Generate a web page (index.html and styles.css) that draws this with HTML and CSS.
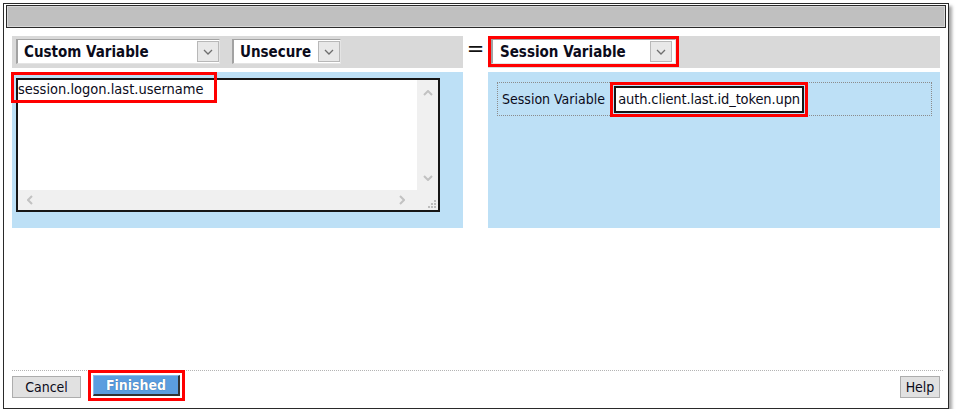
FILE: index.html
```html
<!DOCTYPE html>
<html lang="en">
<head>
<meta charset="utf-8">
<title>Variable Assign</title>
<link rel="stylesheet" href="styles.css">
</head>
<body>
<div class="window">
  <div class="titlebar"></div>
  <div class="main">
    <div class="bar">
      <div class="select sel-custom">
        <span class="sel-text">Custom Variable</span>
        <span class="sel-btn"><svg width="10" height="6" viewBox="0 0 10 6"><polyline points="1,1 5,5 9,1"/></svg></span>
      </div>
      <div class="select sel-unsecure">
        <span class="sel-text">Unsecure</span>
        <span class="sel-btn"><svg width="10" height="6" viewBox="0 0 10 6"><polyline points="1,1 5,5 9,1"/></svg></span>
      </div>
    </div>
    <div class="eq">=</div>
    <div class="bar">
      <div class="select sel-session marked">
        <span class="sel-text">Session Variable</span>
        <span class="sel-btn"><svg width="10" height="6" viewBox="0 0 10 6"><polyline points="1,1 5,5 9,1"/></svg></span>
      </div>
    </div>

    <div class="panel left-panel">
      <div class="textarea">
        <div class="ta-text">session.logon.last.username</div>
        <div class="vscroll">
          <svg width="10" height="6" viewBox="0 0 10 6"><polyline points="1,5 5,1 9,5"/></svg>
          <svg width="10" height="6" viewBox="0 0 10 6"><polyline points="1,1 5,5 9,1"/></svg>
        </div>
        <div class="hscroll">
          <svg width="6" height="10" viewBox="0 0 6 10"><polyline points="5,1 1,5 5,9"/></svg>
          <svg width="6" height="10" viewBox="0 0 6 10"><polyline points="1,1 5,5 1,9"/></svg>
        </div>
        <div class="corner">
          <svg width="10" height="10" viewBox="0 0 10 10">
            <rect x="8" y="2" width="2" height="2"/>
            <rect x="5" y="5" width="2" height="2"/><rect x="8" y="5" width="2" height="2"/>
            <rect x="2" y="8" width="2" height="2"/><rect x="5" y="8" width="2" height="2"/><rect x="8" y="8" width="2" height="2"/>
          </svg>
        </div>
      </div>
      <div class="annot"></div>
    </div>
    <div class="gap-cell"></div>
    <div class="panel right-panel">
      <div class="field">
        <span class="label">Session Variable</span>
        <div class="input marked-in"><span>auth.client.last.id_token.upn</span></div>
      </div>
    </div>
  </div>
  <div class="footer">
    <button class="btn cancel">Cancel</button>
    <button class="btn primary">Finished</button>
    <button class="btn help">Help</button>
  </div>
</div>
</body>
</html>
```

FILE: styles.css
```css
* { box-sizing: border-box; }

html, body {
  margin: 0;
  padding: 0;
  background: #ffffff;
}

body {
  font-family: "DejaVu Sans Condensed", "DejaVu Sans", sans-serif;
  font-stretch: condensed;
  color: #0b0b1a;
}

.window {
  margin: 3px 0 0 3px;
  width: 946px;
  height: 406px;
  border: 1px solid #2a2a2a;
  padding: 1px 2px 2px 2px;
  display: flex;
  flex-direction: column;
  background: #fff;
  box-shadow: 3px 3px 3px rgba(0, 0, 0, 0.35);
}

.titlebar {
  height: 23px;
  background: #c0c0c0;
  border: 1px solid #2a2a2a;
  box-shadow: inset 0 0 0 1px #d8d8d8;
}

.main {
  flex: 1;
  display: grid;
  grid-template-columns: 451px 25px 452px;
  grid-template-rows: 32px 156px;
  row-gap: 4px;
  align-content: start;
  padding: 8px 0 0 6px;
}

.bar {
  background: #d9d9d9;
  display: flex;
  align-items: flex-start;
  gap: 12px;
  padding: 3px 4px;
}

.bar:nth-child(3) {
  padding-left: 3px;
}

.select {
  height: 25px;
  background: #fff;
  border-top: 1px solid #a2a2a2;
  border-left: 2px solid #a2a2a2;
  border-bottom: 1px solid #e4e4e4;
  border-right: 1px solid #e4e4e4;
  display: flex;
  align-items: center;
}

.sel-text {
  flex: 1;
  padding-left: 6px;
  font-weight: bold;
  font-size: 15px;
  white-space: nowrap;
}

.sel-btn {
  width: 22px;
  height: 21px;
  background: #e8e8e8;
  border: 1px solid #b8b8b8;
  display: flex;
  align-items: center;
  justify-content: center;
}

.sel-btn svg polyline {
  fill: none;
  stroke: #6e6e6e;
  stroke-width: 1.3;
}

.sel-custom { width: 204px; }
.sel-unsecure { width: 109px; }
.sel-session { width: 185px; }
.sel-session .sel-btn { margin-right: 3px; }
.sel-session .sel-text { padding-left: 7px; }

.marked {
  outline: 3px solid #ff0000;
  outline-offset: 0;
}

.eq {
  font-family: "DejaVu Sans", sans-serif;
  font-stretch: normal;
  font-size: 21px;
  line-height: 20px;
  text-align: center;
  padding-top: 3px;
  color: #111;
}

.panel {
  background: #bde0f6;
}

.left-panel {
  position: relative;
  padding: 6px 0 0 4px;
}

.textarea {
  width: 424px;
  height: 134px;
  border: 2px solid #161616;
  background: #fff;
  display: grid;
  grid-template-columns: 1fr 21px;
  grid-template-rows: 1fr 20px;
}

.ta-text {
  font-size: 14.5px;
  line-height: 17px;
  padding: 1px 0 0 0;
  white-space: nowrap;
}

.vscroll {
  background: #f0f0f0;
  display: flex;
  flex-direction: column;
  align-items: center;
  justify-content: space-between;
  padding: 10px 0 9px;
}

.hscroll {
  background: #f0f0f0;
  display: flex;
  align-items: center;
  justify-content: space-between;
  padding: 0 12px 0 9px;
}

.vscroll polyline,
.hscroll polyline {
  fill: none;
  stroke: #c2c2c2;
  stroke-width: 2;
}

.corner {
  background: #f0f0f0;
  display: flex;
  align-items: flex-end;
  justify-content: flex-end;
  padding: 0 2px 2px 0;
}

.corner rect {
  fill: #bdbdbd;
}

.annot {
  position: absolute;
  left: -1px;
  top: 0;
  width: 206px;
  height: 31px;
  border: 3px solid #ff0000;
  pointer-events: none;
}

.right-panel {
  padding: 10px 8px 0 9px;
}

.field {
  height: 34px;
  border: 1px dotted #8c8c8c;
  display: flex;
  align-items: center;
  padding-left: 4px;
  gap: 9px;
}

.label {
  font-size: 14px;
  white-space: nowrap;
}

.input {
  width: 190px;
  height: 27px;
  border: 2px solid #161616;
  background: #fff;
  display: flex;
  align-items: center;
  justify-content: flex-end;
  overflow: hidden;
  padding-right: 2px;
  font-size: 14.5px;
  letter-spacing: -0.12px;
  white-space: nowrap;
}

.marked-in {
  outline: 3px solid #ff0000;
  outline-offset: 1px;
}

.footer {
  margin: 0 3px 0 6px;
  height: 36px;
  border-top: 1px dotted #b4b4b4;
  padding-top: 5px;
  display: flex;
  align-items: flex-start;
}

.btn {
  font-family: "DejaVu Sans Condensed", "DejaVu Sans", sans-serif;
  font-stretch: condensed;
  font-size: 14px;
  color: #0b0b1a;
  background: #e1e1e1;
  border: 1px solid #adadad;
  height: 22px;
  padding: 0;
  line-height: 18px;
}

.cancel { width: 69px; }

.primary {
  width: 87px;
  height: 21px;
  margin-top: -1px;
  margin-left: 12px;
  background: #5b9ddf;
  color: #fff;
  font-weight: bold;
  border-top: 1px solid #8cbbe8;
  border-left: 1px solid #8cbbe8;
  border-right: 2px solid #333;
  border-bottom: 2px solid #333;
  text-shadow: 0 0 1px #2a5a8a;
  outline: 3px solid #ff0000;
  outline-offset: 2px;
}

.help {
  width: 40px;
  margin-left: auto;
  margin-right: 3px;
}
```
